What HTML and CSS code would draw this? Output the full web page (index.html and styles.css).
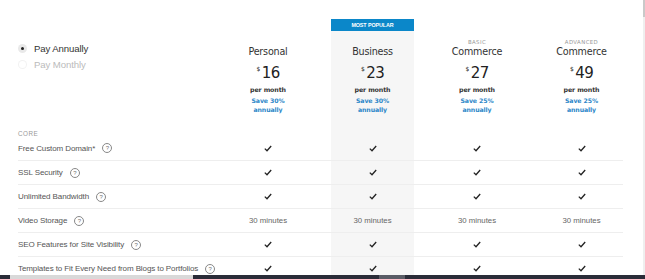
FILE: index.html
```html
<!DOCTYPE html>
<html>
<head>
<meta charset="utf-8">
<link rel="stylesheet" href="styles.css">
</head>
<body>
<div class="page">
  <div class="grid header">
    <div class="billing">
      <div class="opt active"><span class="radio"><span class="dot"></span></span>Pay Annually</div>
      <div class="opt"><span class="radio off"></span>Pay Monthly</div>
    </div>
    <div class="plan">
      <div class="banner"></div>
      <div class="tag"></div>
      <div class="name">Personal</div>
      <div class="price"><span class="cur">$</span>16</div>
      <div class="per">per month</div>
      <div class="save">Save 30%<br>annually</div>
    </div>
    <div class="plan hl">
      <div class="banner blue">MOST POPULAR</div>
      <div class="tag"></div>
      <div class="name">Business</div>
      <div class="price"><span class="cur">$</span>23</div>
      <div class="per">per month</div>
      <div class="save">Save 30%<br>annually</div>
    </div>
    <div class="plan">
      <div class="banner"></div>
      <div class="tag">BASIC</div>
      <div class="name">Commerce</div>
      <div class="price"><span class="cur">$</span>27</div>
      <div class="per">per month</div>
      <div class="save">Save 25%<br>annually</div>
    </div>
    <div class="plan">
      <div class="banner"></div>
      <div class="tag">ADVANCED</div>
      <div class="name">Commerce</div>
      <div class="price"><span class="cur">$</span>49</div>
      <div class="per">per month</div>
      <div class="save">Save 25%<br>annually</div>
    </div>
  </div>

  <div class="grid section">
    <div class="section-label">CORE</div><div></div><div class="hl"></div><div></div><div></div>
  </div>

  <div class="grid row first">
    <div class="label">Free Custom Domain*<span class="q">?</span></div>
    <div class="cell"><svg class="chk" viewBox="0 0 8 7"><path d="M0.8 3.6 L3 5.8 L7.2 1"/></svg></div>
    <div class="cell hl"><svg class="chk" viewBox="0 0 8 7"><path d="M0.8 3.6 L3 5.8 L7.2 1"/></svg></div>
    <div class="cell"><svg class="chk" viewBox="0 0 8 7"><path d="M0.8 3.6 L3 5.8 L7.2 1"/></svg></div>
    <div class="cell"><svg class="chk" viewBox="0 0 8 7"><path d="M0.8 3.6 L3 5.8 L7.2 1"/></svg></div>
  </div>
  <div class="grid row">
    <div class="label">SSL Security<span class="q">?</span></div>
    <div class="cell"><svg class="chk" viewBox="0 0 8 7"><path d="M0.8 3.6 L3 5.8 L7.2 1"/></svg></div>
    <div class="cell hl"><svg class="chk" viewBox="0 0 8 7"><path d="M0.8 3.6 L3 5.8 L7.2 1"/></svg></div>
    <div class="cell"><svg class="chk" viewBox="0 0 8 7"><path d="M0.8 3.6 L3 5.8 L7.2 1"/></svg></div>
    <div class="cell"><svg class="chk" viewBox="0 0 8 7"><path d="M0.8 3.6 L3 5.8 L7.2 1"/></svg></div>
  </div>
  <div class="grid row">
    <div class="label">Unlimited Bandwidth<span class="q">?</span></div>
    <div class="cell"><svg class="chk" viewBox="0 0 8 7"><path d="M0.8 3.6 L3 5.8 L7.2 1"/></svg></div>
    <div class="cell hl"><svg class="chk" viewBox="0 0 8 7"><path d="M0.8 3.6 L3 5.8 L7.2 1"/></svg></div>
    <div class="cell"><svg class="chk" viewBox="0 0 8 7"><path d="M0.8 3.6 L3 5.8 L7.2 1"/></svg></div>
    <div class="cell"><svg class="chk" viewBox="0 0 8 7"><path d="M0.8 3.6 L3 5.8 L7.2 1"/></svg></div>
  </div>
  <div class="grid row">
    <div class="label">Video Storage<span class="q">?</span></div>
    <div class="cell txt">30 minutes</div>
    <div class="cell hl txt">30 minutes</div>
    <div class="cell txt">30 minutes</div>
    <div class="cell txt">30 minutes</div>
  </div>
  <div class="grid row">
    <div class="label">SEO Features for Site Visibility<span class="q">?</span></div>
    <div class="cell"><svg class="chk" viewBox="0 0 8 7"><path d="M0.8 3.6 L3 5.8 L7.2 1"/></svg></div>
    <div class="cell hl"><svg class="chk" viewBox="0 0 8 7"><path d="M0.8 3.6 L3 5.8 L7.2 1"/></svg></div>
    <div class="cell"><svg class="chk" viewBox="0 0 8 7"><path d="M0.8 3.6 L3 5.8 L7.2 1"/></svg></div>
    <div class="cell"><svg class="chk" viewBox="0 0 8 7"><path d="M0.8 3.6 L3 5.8 L7.2 1"/></svg></div>
  </div>
  <div class="grid row">
    <div class="label">Templates to Fit Every Need from Blogs to Portfolios<span class="q">?</span></div>
    <div class="cell"><svg class="chk" viewBox="0 0 8 7"><path d="M0.8 3.6 L3 5.8 L7.2 1"/></svg></div>
    <div class="cell hl"><svg class="chk" viewBox="0 0 8 7"><path d="M0.8 3.6 L3 5.8 L7.2 1"/></svg></div>
    <div class="cell"><svg class="chk" viewBox="0 0 8 7"><path d="M0.8 3.6 L3 5.8 L7.2 1"/></svg></div>
    <div class="cell"><svg class="chk" viewBox="0 0 8 7"><path d="M0.8 3.6 L3 5.8 L7.2 1"/></svg></div>
  </div>
</div>

<div class="scrollbar"><div class="thumb"></div></div>
<div class="taskbar">
  <div class="seg d1"></div><div class="seg l1"></div><div class="seg d2"></div><div class="seg g1"></div><div class="seg d3"></div>
</div>
</body>
</html>
```

FILE: styles.css
```css
html, body {
  margin: 0;
  padding: 0;
  background: #fff;
  overflow: hidden;
}
body {
  font-family: "Liberation Sans", Arial, sans-serif;
  color: #333;
  width: 645px;
  height: 279px;
}
.page {
  padding: 19px 0 0 18px;
  width: 605px;
}
.grid {
  display: grid;
  grid-template-columns: 187px repeat(4, 83px);
  column-gap: 21.5px;
}
.hl {
  background: #f6f6f6;
}

/* header */
.billing {
  padding-top: 22px;
  display: flex;
  flex-direction: column;
  gap: 2px;
}
.opt {
  display: flex;
  align-items: center;
  height: 14px;
  font-size: 9.6px;
  color: #bbb;
  letter-spacing: -0.1px;
}
.opt.active {
  color: #333;
}
.radio {
  width: 9px;
  height: 9px;
  border-radius: 50%;
  background: #e9e9e9;
  margin-right: 7px;
  display: flex;
  align-items: center;
  justify-content: center;
  flex: none;
}
.radio.off {
  background: #fff;
  box-shadow: inset 0 0 0 1px #f2f2f2;
}
.dot {
  width: 3px;
  height: 3px;
  border-radius: 50%;
  background: #222;
}
.plan {
  display: flex;
  flex-direction: column;
  align-items: center;
  text-align: center;
  padding-bottom: 16.5px;
}
.banner {
  height: 12px;
  width: 100%;
  flex: none;
}
.banner.blue {
  background: #0b87c9;
  color: #fff;
  font-size: 5.4px;
  font-weight: bold;
  line-height: 12px;
  letter-spacing: -0.1px;
}
.tag {
  margin-top: 7px;
  height: 8px;
  line-height: 8px;
  font-size: 5.4px;
  color: #9a9a9a;
  letter-spacing: 0.4px;
  font-family: "DejaVu Sans", sans-serif;
}
.name {
  height: 12px;
  line-height: 12px;
  font-size: 9.6px;
  color: #333;
  font-family: "DejaVu Sans", sans-serif;
  letter-spacing: -0.2px;
}
.price {
  margin-top: 5px;
  height: 20px;
  line-height: 20px;
  font-size: 15px;
  color: #222;
  font-family: "DejaVu Sans", sans-serif;
  letter-spacing: -0.6px;
  display: flex;
  align-items: flex-start;
}
.cur {
  font-size: 6px;
  line-height: 12px;
  margin-right: 1.5px;
  letter-spacing: 0;
}
.per {
  margin-top: 1.5px;
  line-height: 9px;
  font-size: 6.3px;
  font-weight: bold;
  color: #333;
  font-family: "DejaVu Sans", sans-serif;
  letter-spacing: -0.1px;
}
.save {
  margin-top: 2px;
  line-height: 9px;
  font-size: 6.2px;
  font-weight: bold;
  color: #2b86c8;
  font-family: "DejaVu Sans", sans-serif;
  letter-spacing: -0.1px;
}

/* table */
.section-label {
  height: 8px;
  line-height: 8px;
  font-size: 6.3px;
  color: #999;
  letter-spacing: 0.5px;
}
.section > div {
  height: 8px;
}
.row {
  height: 23px;
  border-bottom: 1px solid #eeeeee;
}
.row.first {
  height: 22px;
}
.row:last-child {
  border-bottom: none;
}
.label {
  display: flex;
  align-items: center;
  font-size: 8px;
  color: #555;
  white-space: nowrap;
  letter-spacing: -0.1px;
}
.row.first .label,
.row.first .cell {
  padding-bottom: 2px;
}
.q {
  margin-left: 7px;
  width: 8px;
  height: 8px;
  border: 0.8px solid #888;
  border-radius: 50%;
  font-size: 6px;
  line-height: 8px;
  text-align: center;
  color: #777;
  display: inline-flex;
  align-items: center;
  justify-content: center;
  flex: none;
}
.cell {
  display: flex;
  align-items: center;
  justify-content: center;
}
.cell.txt {
  font-size: 7.8px;
  color: #666;
}
.chk {
  width: 8px;
  height: 7px;
  fill: none;
  stroke: #222;
  stroke-width: 1.3;
}

/* window chrome overlays */
.scrollbar {
  position: fixed;
  top: 0;
  right: 0;
  width: 2px;
  height: 279px;
  background: #efefef;
}
.thumb {
  height: 17px;
  background: #c9c9c9;
}
.taskbar {
  position: fixed;
  left: 0;
  bottom: 0;
  width: 645px;
  height: 4px;
  display: flex;
}
.seg { height: 100%; }
.d1 { width: 10px; background: #2a2c38; }
.l1 { width: 183px; background: #d9d9d9; }
.d2 { width: 186px; background: #2a2c38; }
.g1 { width: 26px; background: #5a5c66; }
.d3 { flex: 1; background: #2a2c38; }
```
